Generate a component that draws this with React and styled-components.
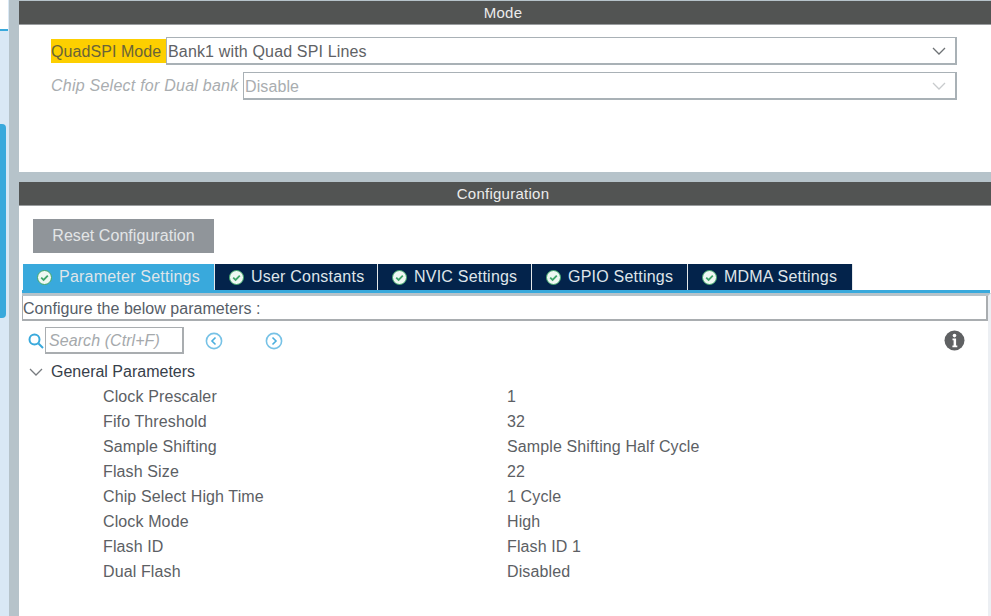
import React from "react";
import styled, { createGlobalStyle } from "styled-components";

const GlobalStyle = createGlobalStyle`
html, body {
  margin: 0;
  padding: 0;
  background: #fff;
}
body {
  font-family: "Liberation Sans", Arial, sans-serif;
  overflow: hidden;
}
`;

const Page = styled.div`
width: 991px;
height: 616px;
display: flex;
background: #b6c3ca;
overflow: hidden;`;

const SideStrip = styled.div`
width: 9px;
flex: none;
display: flex;
flex-direction: column;
background: #d9e8f5;`;

const SideTop = styled.div`
width: 8px;
height: 29px;
background: #fff;
border-bottom: 2px solid #39a9dc;`;

const SideThumb = styled.div`
width: 6px;
height: 194px;
margin-top: 93px;
background: #39a9dc;
border-radius: 0 4px 4px 0;`;

const Main = styled.div`
margin-left: 10px;
flex: 1;
display: flex;
flex-direction: column;
padding-top: 1px;
gap: 10px;`;

const Section = styled.section`
background: #fff;
display: flex;
flex-direction: column;
flex: ${(p) => (p.$grow ? 1 : "none")};
height: ${(p) => (p.$grow ? "auto" : "171px")};`;

const SectionTitle = styled.div`
height: 23px;
flex: none;
box-sizing: content-box;
padding-right: 4px;
background: #525453;
border-bottom: 1px solid #9a9d9f;
color: #ececec;
font-size: 15px;
line-height: 24px;
text-align: center;
letter-spacing: 0.25px;`;

const ModeBody = styled.div`
padding: 12px 34px 0 32px;
display: flex;
flex-direction: column;
gap: 7px;`;

const ModeRow = styled.div`
display: flex;
align-items: stretch;
height: 28px;`;

const ModeLabel = styled.div`
flex: none;
width: ${(p) => p.$w}px;
height: ${(p) => (p.$hl ? "24px" : "28px")};
margin-top: ${(p) => (p.$hl ? "2px" : "0")};
background: ${(p) => (p.$hl ? "#fdcf00" : "transparent")};
color: ${(p) => (p.$hl ? "#6a6438" : "#a9adb0")};
font-size: 16px;
font-style: ${(p) => (p.$hl ? "normal" : "italic")};
line-height: ${(p) => (p.$hl ? "25px" : "28px")};
letter-spacing: ${(p) => (p.$hl ? 0.07 : 0.24)}px;
white-space: nowrap;`;

const Select = styled.div`
flex: 1;
display: flex;
align-items: center;
justify-content: space-between;
box-sizing: border-box;
padding: 2px 9px 0 1px;
border: 1px solid #a9b1b6;
border-width: 1px 2px 2px 1px;
color: ${(p) => (p.$off ? "#a9adb0" : "#5f6265")};
font-size: 16px;
letter-spacing: ${(p) => (p.$off ? 0.1 : 0.16)}px;
white-space: nowrap;
svg {
  width: 14px;
  height: 8px;
  margin-top: -2px;
  stroke: ${(p) => (p.$off ? "#c8cbcd" : "#6e7275")};
}`;

const ConfigBody = styled.div`
flex: 1;
display: flex;
flex-direction: column;
padding: 13px 0 0 3px;`;

const ResetButton = styled.button`
align-self: flex-start;
margin-left: 11px;
width: 181px;
height: 34px;
border: none;
padding: 0;
background: #90959a;
color: #e3e5e7;
font-family: inherit;
font-size: 16px;
letter-spacing: 0.05px;`;

const TabBar = styled.div`
display: flex;
margin-top: 11px;
margin-left: 1px;
height: 26px;`;

const Tab = styled.div`
display: flex;
align-items: center;
box-sizing: border-box;
width: ${(p) => p.$w}px;
padding-left: 14px;
gap: 7px;
background: ${(p) => (p.$active ? "#39a9dc" : "#03234b")};
border-right: 1px solid #e4e8ea;
color: #dfe5ea;
font-size: 16px;
letter-spacing: 0.22px;
white-space: nowrap;`;

const TabRule = styled.div`
height: 3px;
margin-right: 1px;
background: #39a9dc;`;

const TabPanel = styled.div`
flex: 1;
display: flex;
flex-direction: column;
border-top: 3px solid #b6c3ca;
border-right: 3px solid #eceff3;`;

const DescBox = styled.div`
box-sizing: border-box;
height: 25px;
border: 1px solid #a9adb0;
border-width: 0 2px 2px 1px;
color: #565d67;
font-size: 16px;
line-height: 26px;
letter-spacing: 0.03px;`;

const SearchRow = styled.div`
display: flex;
align-items: center;
height: 39px;
padding-left: 6px;`;

const SearchInput = styled.div`
box-sizing: border-box;
width: 139px;
height: 27px;
margin-left: 1px;
border: 1px solid #a9adb0;
border-width: 1px 2px 2px 1px;
padding-left: 3px;
color: #a5a9ac;
font-size: 16px;
font-style: italic;
line-height: 25px;
letter-spacing: 0.07px;`;

const NavButton = styled.svg`
width: 18px;
height: 18px;
margin-left: ${(p) => p.$gap}px;`;

const InfoIcon = styled.svg`
width: 21px;
height: 21px;
margin-left: auto;
margin-right: 23px;`;

const GroupRow = styled.div`
display: flex;
align-items: center;
height: 20px;
margin-top: 2px;
padding-left: 7px;
gap: 8px;
color: #37404a;
font-size: 16px;
svg {
  width: 14px;
  height: 8px;
}`;

const ParamList = styled.div`
display: flex;
flex-direction: column;
margin-top: 2px;`;

const ParamRow = styled.div`
display: grid;
grid-template-columns: 404px 1fr;
padding-left: 81px;
height: 25px;
line-height: 25px;
color: #5c6064;
font-size: 16px;
letter-spacing: 0.12px;`;

const tabs = [
  { label: "Parameter Settings", w: 192, active: true },
  { label: "User Constants", w: 163 },
  { label: "NVIC Settings", w: 154 },
  { label: "GPIO Settings", w: 156 },
  { label: "MDMA Settings", w: 165 },
];

const params = [
  ["Clock Prescaler", "1"],
  ["Fifo Threshold", "32"],
  ["Sample Shifting", "Sample Shifting Half Cycle"],
  ["Flash Size", "22"],
  ["Chip Select High Time", "1 Cycle"],
  ["Clock Mode", "High"],
  ["Flash ID", "Flash ID 1"],
  ["Dual Flash", "Disabled"],
];

const Chevron = () => (
  <svg viewBox="0 0 14 8" fill="none" strokeWidth="1.3">
    <path d="M1 1l6 6 6-6" />
  </svg>
);

const CheckBadge = () => (
  <svg width="15" height="15" viewBox="0 0 15 15" style={{ flex: "none" }}>
    <circle cx="7.5" cy="7.5" r="7" fill="#eef8f2" stroke="#3fa66a" strokeWidth="1" />
    <path d="M4.2 7.6l2.4 2.3 4.2-4.3" fill="none" stroke="#3fa66a" strokeWidth="1.8" />
  </svg>
);

const App = () => {
  return (
    <Page>
      <GlobalStyle />
      <SideStrip>
        <SideTop />
        <SideThumb />
      </SideStrip>
      <Main>
        <Section>
          <SectionTitle>Mode</SectionTitle>
          <ModeBody>
            <ModeRow>
              <ModeLabel $hl $w={115}>QuadSPI Mode</ModeLabel>
              <Select>
                Bank1 with Quad SPI Lines
                <Chevron />
              </Select>
            </ModeRow>
            <ModeRow>
              <ModeLabel $w={192}>Chip Select for Dual bank</ModeLabel>
              <Select $off>
                Disable
                <Chevron />
              </Select>
            </ModeRow>
          </ModeBody>
        </Section>
        <Section $grow>
          <SectionTitle>Configuration</SectionTitle>
          <ConfigBody>
            <ResetButton>Reset Configuration</ResetButton>
            <TabBar>
              {tabs.map((t) => (
                <Tab key={t.label} $w={t.w} $active={t.active}>
                  <CheckBadge />
                  {t.label}
                </Tab>
              ))}
            </TabBar>
            <TabRule />
            <TabPanel>
              <DescBox>Configure the below parameters :</DescBox>
              <SearchRow>
                <svg width="16" height="16" viewBox="0 0 16 16" fill="none" stroke="#39a9dc" strokeWidth="2">
                  <circle cx="6.5" cy="6.5" r="5" />
                  <path d="M10.5 10.5l4.5 4.5" />
                </svg>
                <SearchInput>Search (Ctrl+F)</SearchInput>
                <NavButton $gap={21} viewBox="0 0 18 18" fill="none" stroke="#4aaede" strokeWidth="1.6">
                  <circle cx="9" cy="9" r="7.6" opacity="0.75" />
                  <path d="M10.5 5.5L7 9l3.5 3.5" />
                </NavButton>
                <NavButton $gap={42} viewBox="0 0 18 18" fill="none" stroke="#4aaede" strokeWidth="1.6">
                  <circle cx="9" cy="9" r="7.6" opacity="0.75" />
                  <path d="M7.5 5.5L11 9l-3.5 3.5" />
                </NavButton>
                <InfoIcon viewBox="0 0 21 21">
                  <circle cx="10.5" cy="10.5" r="10" fill="#5f6163" />
                  <circle cx="10.5" cy="5.6" r="1.8" fill="#fff" />
                  <path d="M8.5 8.6h3.6v7h1.2v1.6H8.4v-1.6h1.2v-5.4H8.5z" fill="#fff" />
                </InfoIcon>
              </SearchRow>
              <GroupRow>
                <svg viewBox="0 0 14 8" fill="none" stroke="#777b7f" strokeWidth="1.3">
                  <path d="M1 1l6 6 6-6" />
                </svg>
                General Parameters
              </GroupRow>
              <ParamList>
                {params.map(([name, value]) => (
                  <ParamRow key={name}>
                    <span>{name}</span>
                    <span>{value}</span>
                  </ParamRow>
                ))}
              </ParamList>
            </TabPanel>
          </ConfigBody>
        </Section>
      </Main>
    </Page>
  );
};

export default App;
